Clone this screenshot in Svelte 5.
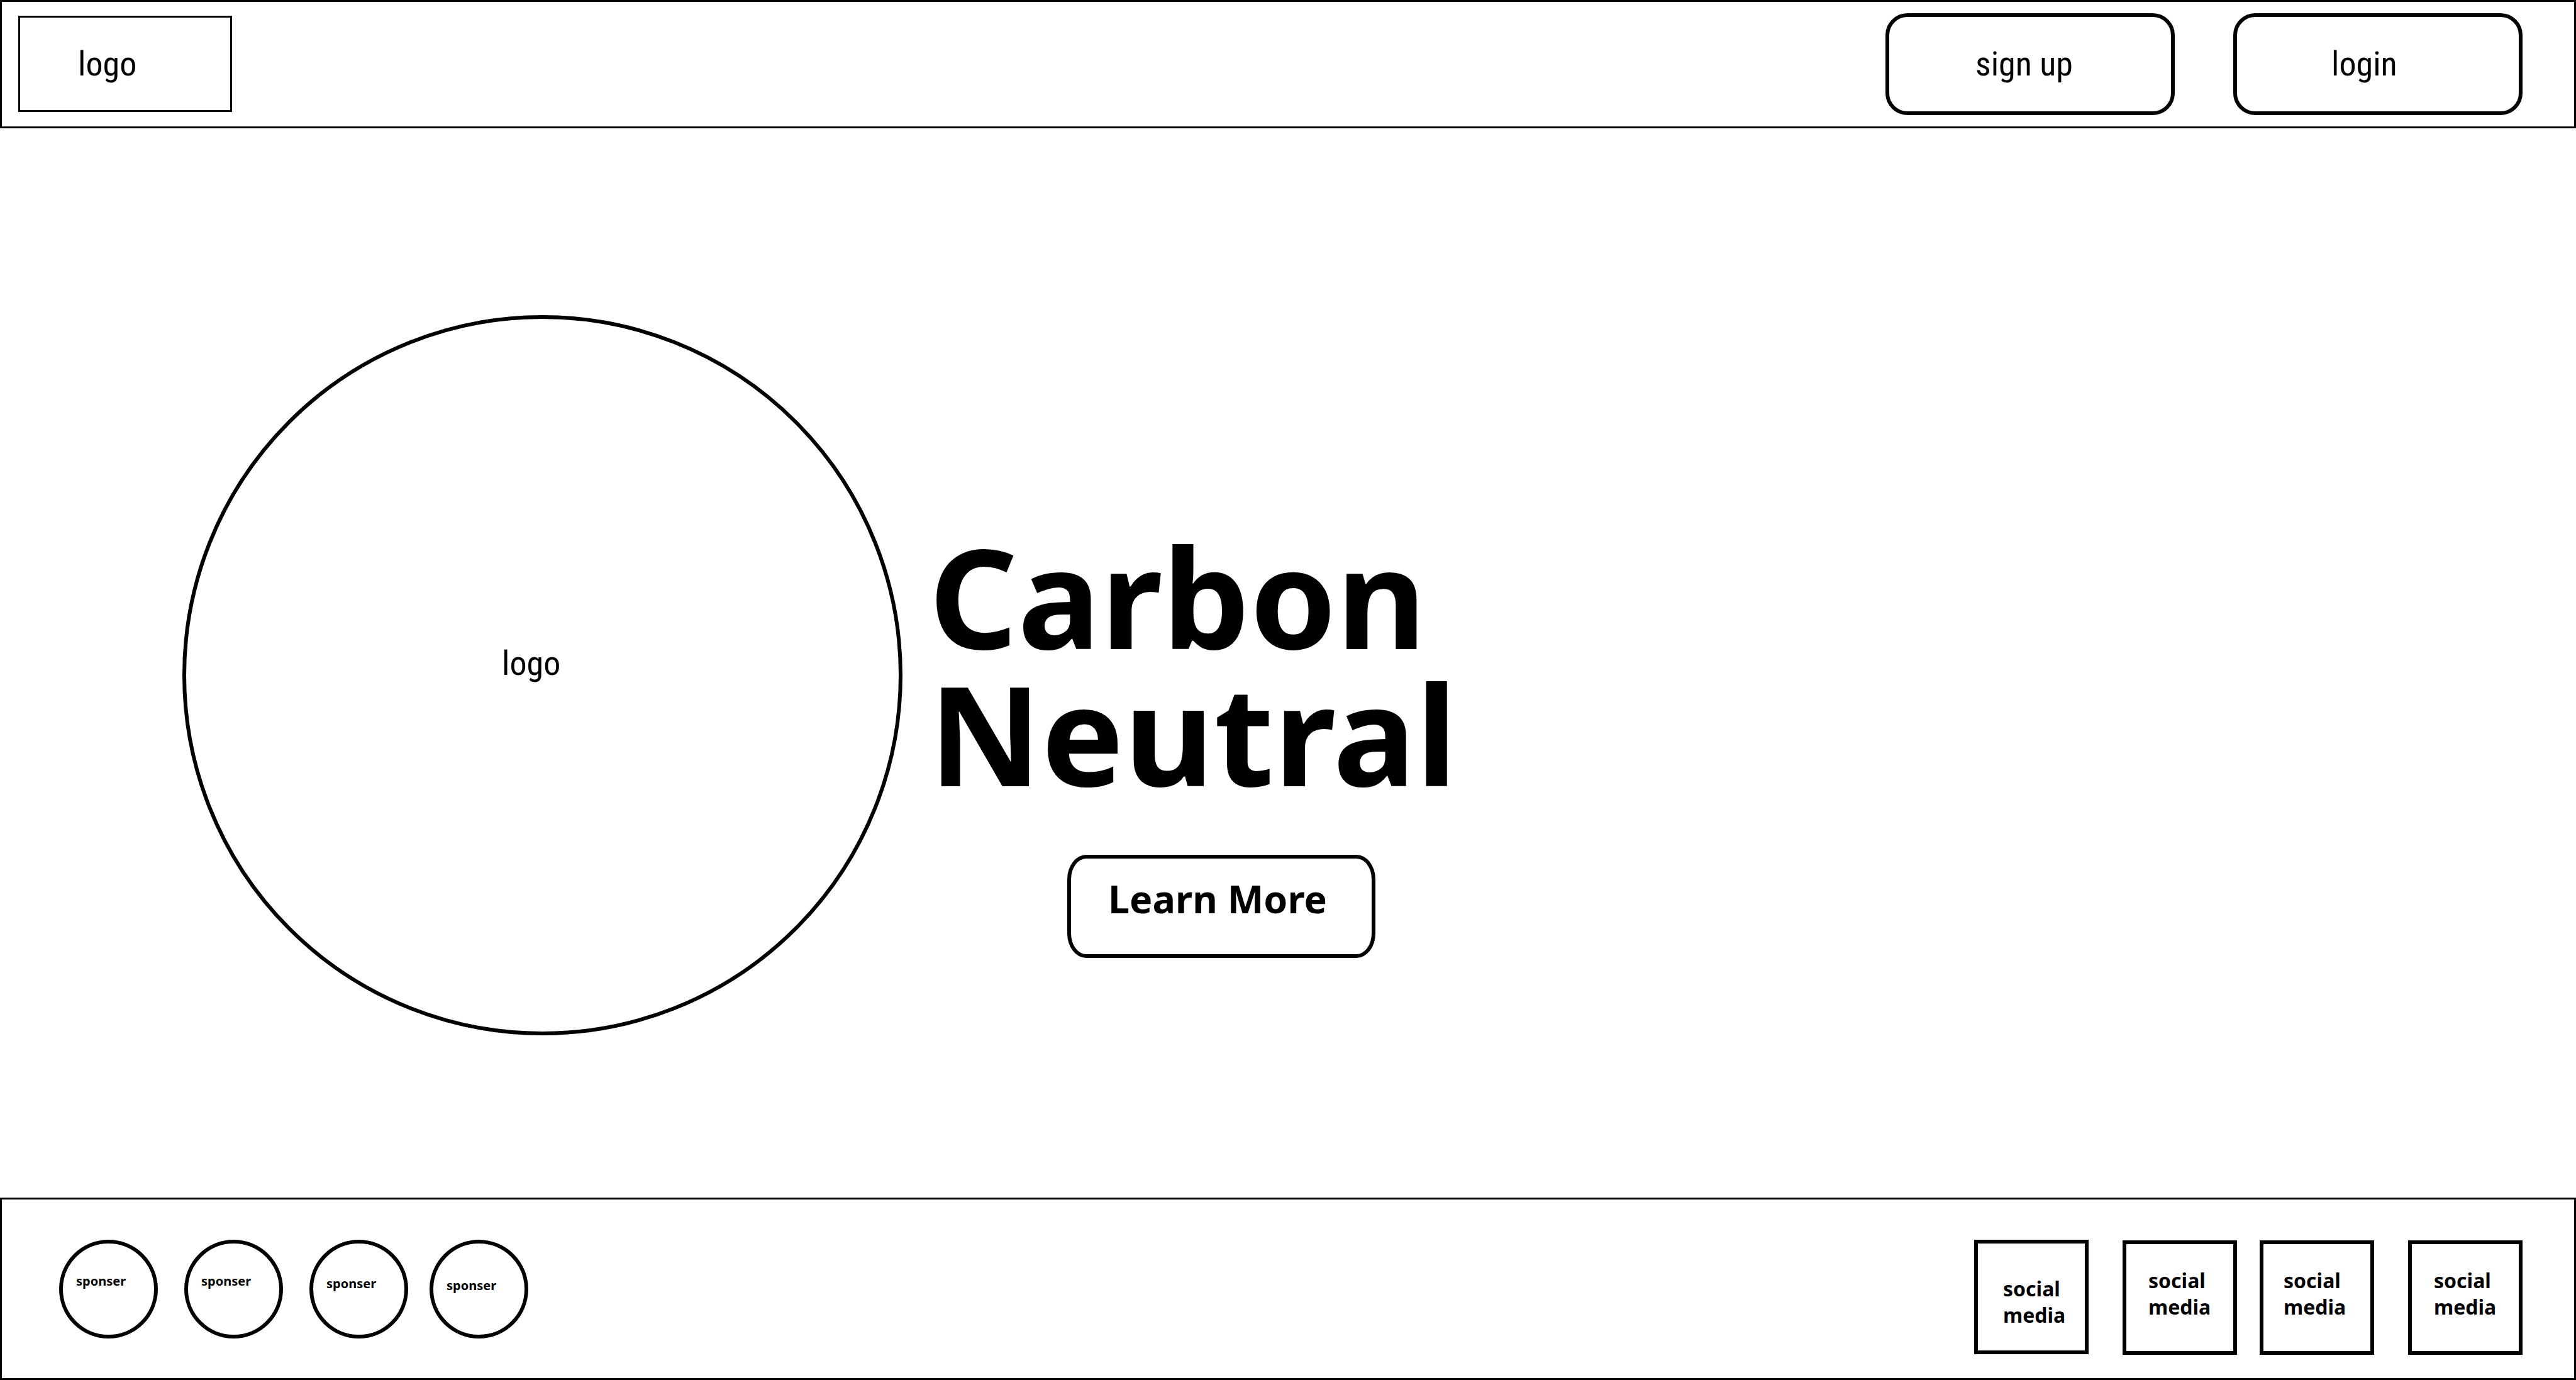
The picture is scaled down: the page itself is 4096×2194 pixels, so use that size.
<script>
  const sponsors = [
    { label: 'sponser', tone: 'high' },
    { label: 'sponser', tone: 'high' },
    { label: 'sponser', tone: 'mid' },
    { label: 'sponser', tone: 'low' }
  ];
  const socials = ['first', 'second', 'third', 'fourth'];
</script>

<div class="page">
  <header class="bar top">
    <a class="brand" href="#home">logo</a>
    <nav class="account" aria-label="Account">
      <button class="pill signup" type="button">sign up</button>
      <button class="pill login" type="button">login</button>
    </nav>
  </header>

  <main class="hero">
    <div class="emblem">logo</div>
    <section class="copy">
      <h1>Carbon<br />Neutral</h1>
      <button class="more" type="button">Learn More</button>
    </section>
  </main>

  <footer class="bar bottom">
    <ul class="sponsors">
      {#each sponsors as sponsor}
        <li class={sponsor.tone}>{sponsor.label}</li>
      {/each}
    </ul>
    <ul class="socials">
      {#each socials as name}
        <li class={name}><a href="#social">social<br />media</a></li>
      {/each}
    </ul>
  </footer>
</div>

<style>
  :global(body) {
    background: #fff;
  }

  .page,
  .page * {
    box-sizing: border-box;
  }

  .page {
    display: flex;
    flex-direction: column;
    min-height: 100vh;
    color: #000;
    font-family: 'Noto Sans', 'Open Sans', sans-serif;
  }

  .page a {
    color: inherit;
    text-decoration: none;
  }

  .bar {
    display: flex;
    align-items: flex-start;
    justify-content: space-between;
    border: 3px solid #000;
  }

  .top {
    min-height: 204px;
    padding: 18px 82px 15px 26px;
  }

  .brand,
  .pill,
  .emblem {
    font-family: 'Roboto Condensed', Roboto, sans-serif;
    font-size: 54px;
    font-weight: 400;
    line-height: 64px;
  }

  .brand {
    width: 340px;
    height: 153px;
    margin-top: 4px;
    padding: 42px 0 0 92px;
    border: 3px solid #000;
  }

  .account {
    display: flex;
    gap: 93px;
  }

  .pill,
  .more {
    display: flex;
    align-items: flex-start;
    margin: 0;
    border: 6px solid #000;
    background: none;
    color: inherit;
    white-space: nowrap;
  }

  .pill {
    width: 460px;
    height: 162px;
    padding: 43px 0 0;
    border-radius: 35px;
  }

  .signup {
    padding-left: 137px;
  }

  .login {
    padding-left: 150px;
  }

  .hero {
    display: flex;
    flex: 1;
    align-items: flex-start;
    gap: 42px;
    padding: 297px 290px 0;
  }

  .emblem {
    flex: none;
    width: 1145px;
    height: 1145px;
    padding: 516px 0 0 502px;
    border: 6px solid #000;
    border-radius: 50%;
  }

  .copy {
    padding-top: 337px;
  }

  h1 {
    margin: 0;
    font-size: 220px;
    font-weight: 700;
    line-height: 218px;
  }

  .more {
    width: 490px;
    height: 164px;
    margin: 85px 0 0 220px;
    padding: 28px 0 0 59px;
    border-radius: 30px / 39px;
    font-family: inherit;
    font-size: 61px;
    font-weight: 700;
    line-height: 72px;
  }

  .bottom {
    min-height: 290px;
    padding: 64px 82px 0 91px;
  }

  ul {
    display: flex;
    margin: 0;
    padding: 0;
    list-style: none;
    font-weight: 700;
  }

  .sponsors {
    font-size: 20px;
    line-height: 28px;
  }

  .sponsors li {
    width: 157px;
    height: 157px;
    margin-right: 42px;
    padding: 46px 0 0 21px;
    border: 6px solid #000;
    border-radius: 50%;
  }

  .sponsors .mid {
    margin-right: 34px;
    padding-top: 50px;
  }

  .sponsors .low {
    margin-right: 0;
    padding-top: 53px;
  }

  .socials {
    font-size: 32px;
    line-height: 42px;
  }

  .socials li {
    margin-left: 54px;
  }

  .socials .third {
    margin-left: 36px;
  }

  .socials a {
    display: block;
    width: 182px;
    height: 182px;
    margin-top: 1px;
    padding: 37px 0 0 35px;
    border: 6px solid #000;
  }

  .socials .first a {
    margin-top: 0;
    padding: 51px 0 0 40px;
  }

  .socials .third a {
    padding-left: 32px;
  }
</style>
